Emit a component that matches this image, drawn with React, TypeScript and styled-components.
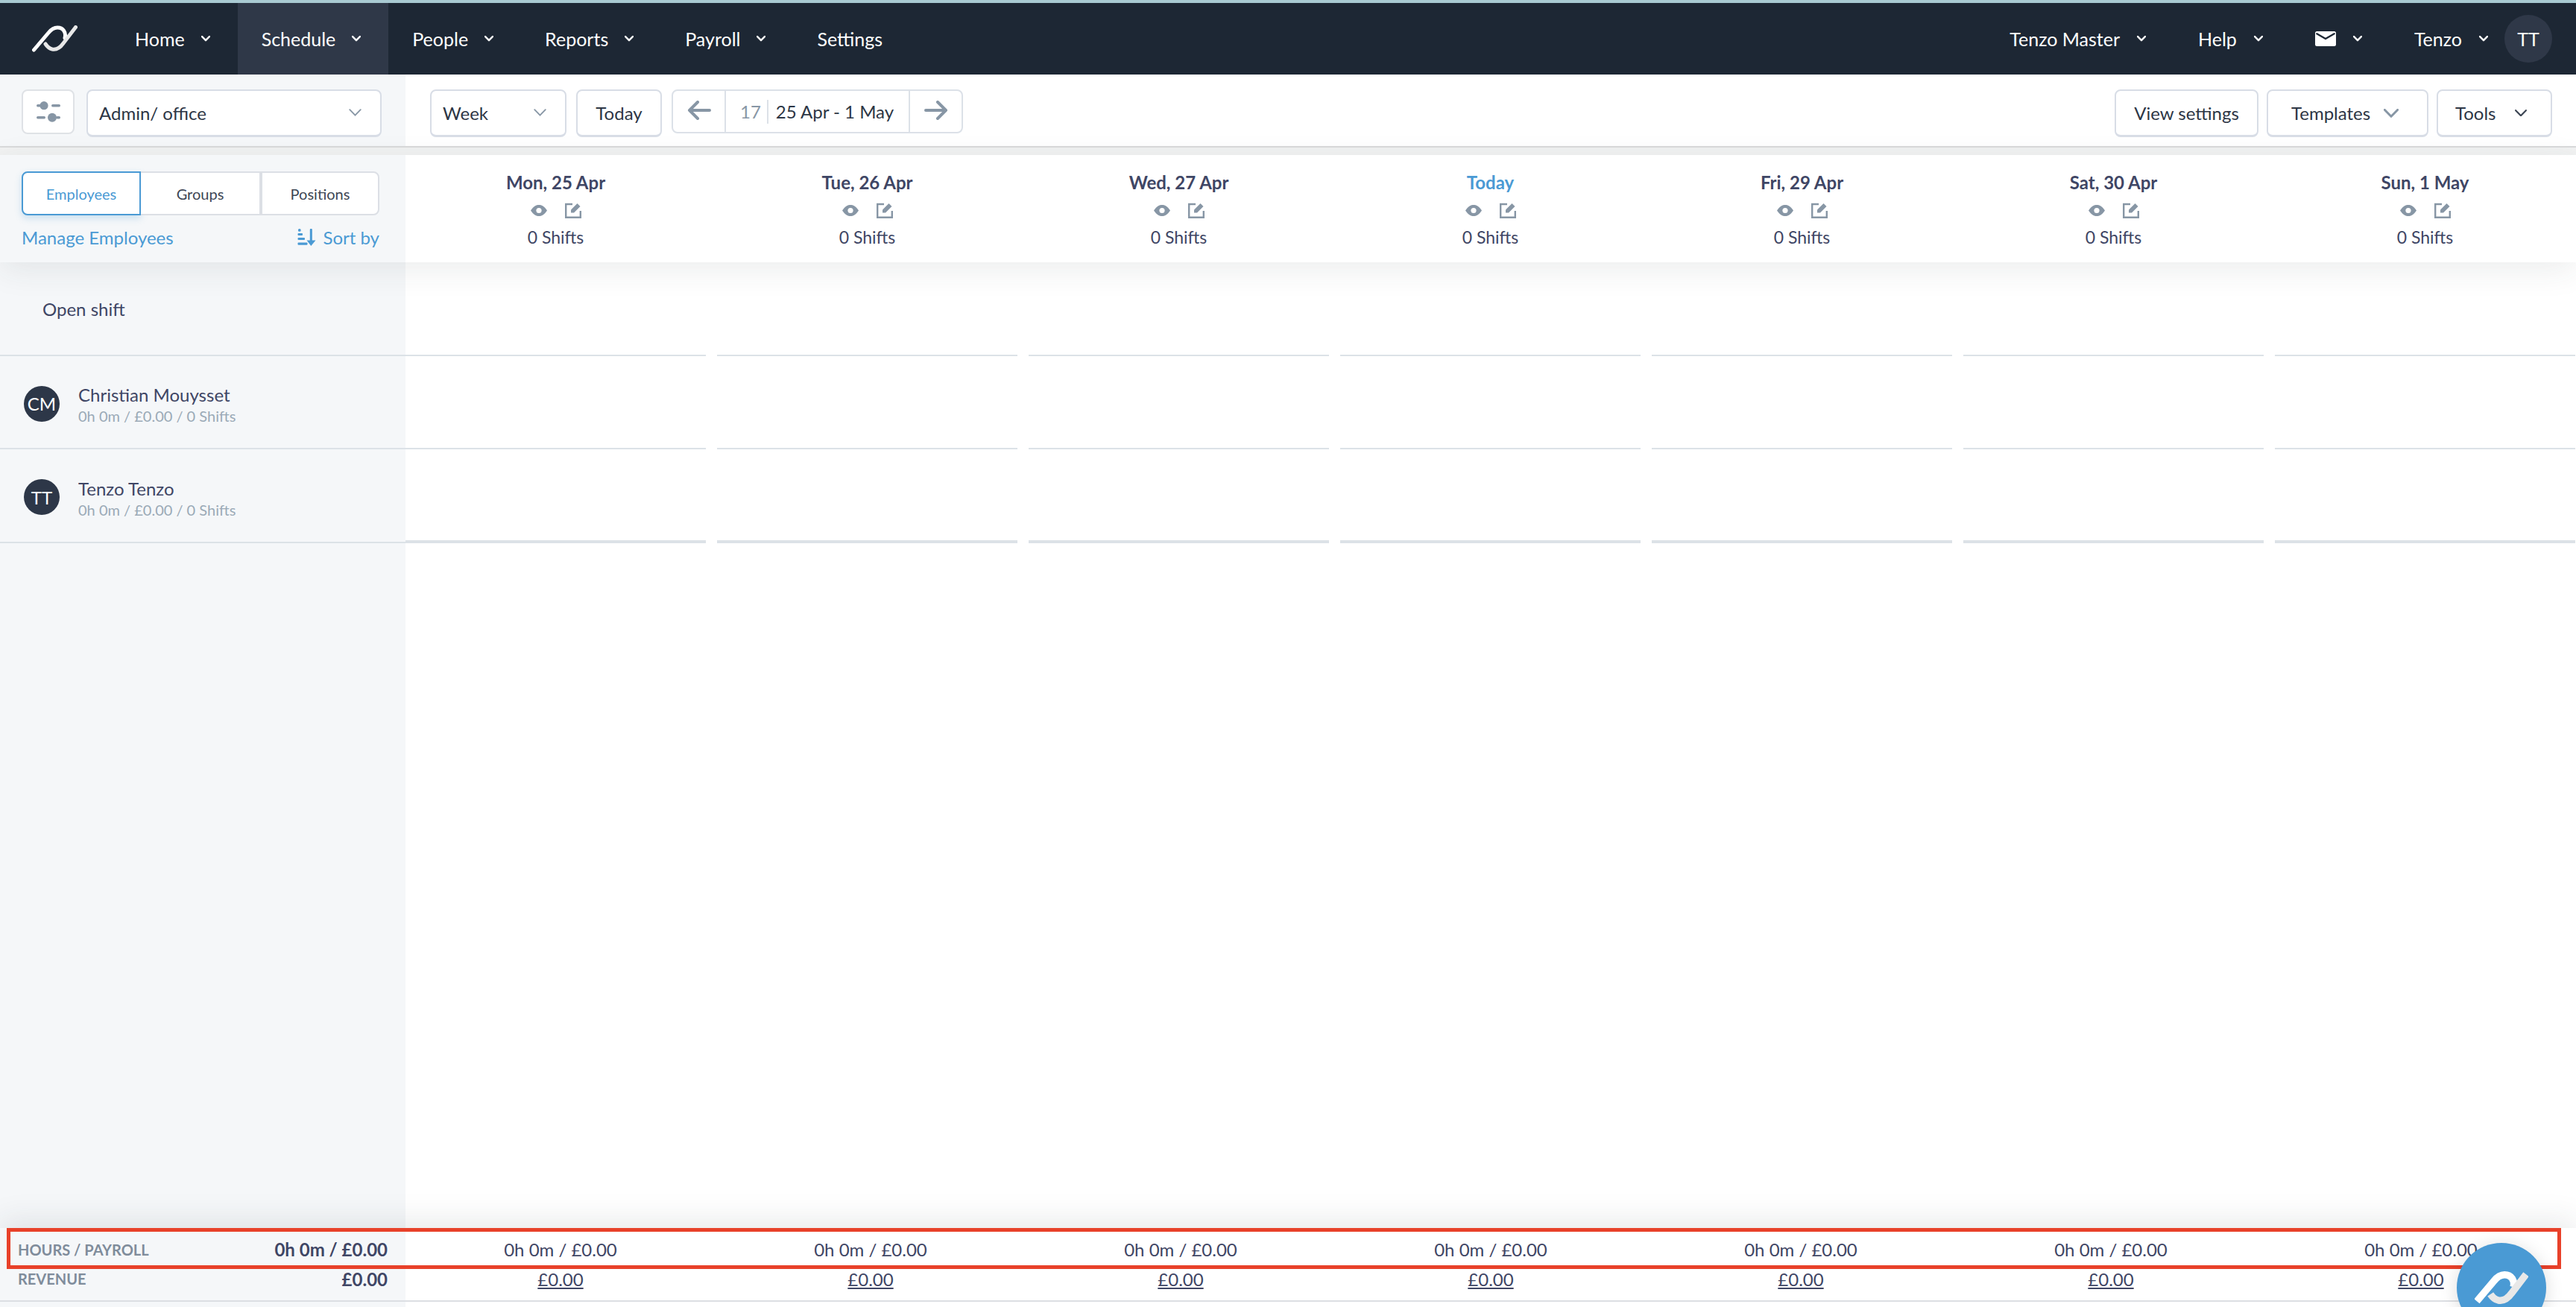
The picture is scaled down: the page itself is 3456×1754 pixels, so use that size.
import styled, { createGlobalStyle } from "styled-components";

const GlobalStyle = createGlobalStyle`
  html, body {
    margin: 0;
    padding: 0;
    background: #ffffff;
  }
  body {
    font-family: Lato, "Noto Sans", sans-serif;
    color: #3f4665;
    overflow: hidden;
  }
  * {
    box-sizing: border-box;
  }
`;

const Page = styled.div`
  position: relative;
  width: 3456px;
  height: 1754px;
  display: flex;
  flex-direction: column;
  overflow: hidden;
  border-top: 4px solid #a9cad2;
`;

const Nav = styled.nav`
  height: 96px;
  flex: none;
  display: flex;
  align-items: stretch;
  background: #1d2734;
  color: #ffffff;
  font-size: 25px;
`;

const LogoSlot = styled.div`
  width: 149px;
  padding-left: 43px;
  display: flex;
  align-items: center;
`;

const NavItem = styled.div`
  display: flex;
  align-items: center;
  gap: 23px;
  padding: 0 38px 0 32px;
`;

const MainNavItem = styled(NavItem)<{ $active?: boolean }>`
  gap: 22px;
  padding-right: 37px;
  background: ${(p) => (p.$active ? "#2f3848" : "transparent")};
`;

const Spacer = styled.div`
  flex: 1;
`;

const NavAvatar = styled.div`
  width: 64px;
  height: 64px;
  margin: 0 32px 0 -16px;
  align-self: center;
  border-radius: 50%;
  background: #2f3848;
  display: flex;
  align-items: center;
  justify-content: center;
  font-size: 25px;
`;

const Toolbar = styled.div`
  height: 98px;
  flex: none;
  display: flex;
  border-bottom: 2px solid #d9dadb;
`;

const ToolbarSide = styled.div`
  width: 544px;
  flex: none;
  padding: 20px 0 0 29px;
  display: flex;
  align-items: flex-start;
  gap: 16px;
  background: #f5f7f9;
`;

const ToolbarMain = styled.div`
  flex: 1;
  padding: 20px 32px 0 33px;
  display: flex;
  align-items: flex-start;
  gap: 13px;
`;

const Button = styled.div<{ $w: number; $pad?: string; $center?: boolean }>`
  width: ${(p) => p.$w}px;
  height: 64px;
  padding: ${(p) => (p.$center ? "0" : p.$pad ?? "0 25px 0 15px")};
  display: flex;
  align-items: center;
  justify-content: ${(p) => (p.$center ? "center" : "space-between")};
  flex: none;
  background: #ffffff;
  border: 2px solid #d8dde6;
  border-bottom-width: 3px;
  border-radius: 8px;
  font-size: 24px;
  color: #2d3645;
`;

const IconButton = styled.div`
  width: 71px;
  height: 60px;
  flex: none;
  display: flex;
  align-items: center;
  justify-content: center;
  background: #ffffff;
  border: 2px solid #dfe2e6;
  border-radius: 8px;
`;

const DateGroup = styled.div`
  width: 391px;
  height: 59px;
  flex: none;
  display: flex;
  align-items: stretch;
  border: 2px solid #dce1e8;
  border-radius: 8px;
`;

const ArrowCell = styled.div`
  width: 69px;
  flex: none;
  display: flex;
  align-items: center;
  justify-content: center;
  padding-bottom: 3px;
`;

const DateCell = styled.div`
  flex: 1;
  display: flex;
  align-items: center;
  padding-left: 19px;
  border-left: 2px solid #dce1e8;
  border-right: 2px solid #dce1e8;
  font-size: 24px;
  color: #2d3645;
`;

const WeekNumber = styled.span`
  color: #8796a5;
  padding-right: 8px;
  margin-right: 10px;
  line-height: 32px;
  border-right: 2px solid #dce1e8;
`;

const ToolbarRight = styled.div`
  margin-left: auto;
  display: flex;
  gap: 11px;
`;

const Gutter = styled.div`
  height: 10px;
  flex: none;
  background: #f1f2f2;
`;

const HeaderRow = styled.div`
  position: relative;
  z-index: 1;
  height: 144px;
  flex: none;
  display: flex;
  box-shadow: 0 10px 40px rgba(40, 50, 60, 0.09);
`;

const HeaderSide = styled.div`
  width: 544px;
  flex: none;
  padding: 22px 35px 0 29px;
  background: #f5f7f9;
`;

const Tabs = styled.div`
  height: 59px;
  display: flex;
  font-size: 20px;
`;

const Tab = styled.div<{ $active?: boolean; $w: number }>`
  width: ${(p) => p.$w}px;
  display: flex;
  align-items: center;
  justify-content: center;
  background: #ffffff;
  color: ${(p) => (p.$active ? "#4a9ad4" : "#3d4654")};
  border: 2px solid ${(p) => (p.$active ? "#4a9ad4" : "#dcdfe5")};
  border-radius: ${(p) => (p.$active ? "8px 0 0 8px" : "0")};
  box-shadow: ${(p) => (p.$active ? "0 4px 10px rgba(74, 154, 212, 0.25)" : "none")};
  border-left-width: ${(p) => (p.$active ? 2 : 0)}px;
  border-right-width: 2px;

  &:last-child {
    border-left-width: 2px;
    border-radius: 0 8px 8px 0;
  }
`;

const SideLinks = styled.div`
  margin-top: 15px;
  display: flex;
  justify-content: space-between;
  align-items: center;
  font-size: 24px;
  color: #4a9ad4;
`;

const SortBy = styled.div`
  display: flex;
  align-items: center;
  gap: 9px;
`;

const DayHeads = styled.div`
  flex: 1;
  display: grid;
  grid-template-columns: repeat(7, 418px);
  background: #ffffff;
  overflow: hidden;
`;

const DayHead = styled.div<{ $today?: boolean }>`
  padding: 22px 15px 0 0;
  display: flex;
  flex-direction: column;
  align-items: center;
  h3 {
    margin: 0;
    font-size: 24px;
    line-height: 30px;
    font-weight: 700;
    color: ${(p) => (p.$today ? "#4a9ad4" : "#3f4665")};
  }
`;

const DayIcons = styled.div`
  height: 38px;
  margin-top: 3px;
  display: flex;
  align-items: center;
  gap: 24px;
`;

const ShiftCount = styled.div`
  margin-top: 3px;
  font-size: 23px;
  line-height: 28px;
  color: #3f4665;
`;

const Body = styled.div`
  flex: 1;
  display: flex;
  min-height: 0;
`;

const Names = styled.div`
  width: 544px;
  flex: none;
  background: #f5f7f9;
`;

const NameRow = styled.div`
  height: 125.7px;
  display: flex;
  align-items: center;
  gap: 25px;
  padding: 4px 0 0 32px;
  border-bottom: 2px solid #dce2e7;
  font-size: 24px;
  color: #3f4665;
`;

const OpenShift = styled(NameRow)`
  padding: 2px 0 0 57px;
`;

const Avatar = styled.div`
  width: 48px;
  height: 48px;
  border-radius: 50%;
  background: #2d3748;
  color: #ffffff;
  font-size: 24px;
  display: flex;
  align-items: center;
  justify-content: center;
  flex: none;
`;

const Person = styled.div`
  margin-top: 3px;
  display: flex;
  flex-direction: column;
  gap: 2px;
  line-height: 28px;
  small {
    font-size: 20px;
    line-height: 24px;
    color: #9baab7;
  }
`;

const Grid = styled.div`
  flex: 1;
  overflow: hidden;
`;

const GridCell = styled.div`
  border-bottom: 2px solid #dce2e7;
  margin-right: 15px;
`;

const GridRow = styled.div`
  height: 125.7px;
  display: grid;
  grid-template-columns: repeat(7, 418px);
  &:last-child ${GridCell} {
    border-bottom-width: 4px;
  }
`;

const Footer = styled.div`
  position: relative;
  z-index: 1;
  height: 106px;
  flex: none;
  padding-bottom: 9px;
  background: linear-gradient(to right, #f5f7f9 544px, #ffffff 544px);
  box-shadow: 0 -10px 40px rgba(40, 50, 60, 0.1);
  &::after {
    content: "";
    position: absolute;
    left: 0;
    right: 0;
    bottom: 7px;
    height: 2px;
    background: #dcdfe3;
  }
`;

const FooterRow = styled.div`
  height: 40px;
  display: grid;
  grid-template-columns: 544px repeat(7, 416px);
  align-items: center;
  &:first-child {
    margin-top: 9px;
    height: 39px;
  }
`;

const FooterLabel = styled.div`
  display: flex;
  justify-content: space-between;
  align-items: center;
  padding: 0 24px;
  font-size: 24px;
  font-weight: 700;
  color: #3f4665;
  span {
    font-size: 20px;
    color: #7f8c9b;
  }
`;

const FooterCell = styled.div`
  text-align: center;
  font-size: 24px;
  color: #3f4665;
`;

const RevenueLink = styled.a`
  color: #3f4665;
  text-decoration: underline;
  text-underline-offset: 2px;
`;

const Highlight = styled.div`
  position: absolute;
  left: 9px;
  top: 1644px;
  width: 3427px;
  height: 55px;
  border: 5px solid #e8412a;
  z-index: 2;
`;

const Fab = styled.div`
  position: absolute;
  left: 3296px;
  top: 1664px;
  width: 120px;
  height: 120px;
  border-radius: 50%;
  background: #4a9ad4;
  box-shadow: 0 4px 24px rgba(0, 0, 0, 0.14);
  z-index: 3;
  display: flex;
  justify-content: center;
  padding-top: 37px;
`;

const Chevron = ({ size = 14, color = "#ffffff", width = 2.4 }: { size?: number; color?: string; width?: number }) => (
  <svg width={size} height={size * 0.6} viewBox="0 0 14 8.4" fill="none">
    <polyline
      points="1,1 7,7.2 13,1"
      stroke={color}
      strokeWidth={(width * 14) / size}
      strokeLinecap="round"
      strokeLinejoin="round"
    />
  </svg>
);

const Logo = ({ w, h, stroke, cap }: { w: number; h: number; stroke: number; cap: "round" | "butt" }) => (
  <svg width={w} height={h} viewBox="0 0 61 36" fill="none">
    <path d="M2.5 33 L22 10 C26 5 30 3 34 3 C42 3 46 10 44 17" stroke="#ffffff" strokeWidth={stroke} strokeLinecap={cap} />
    <path d="M58.5 2.5 L42 24 C37 31 32 33 27 32 C23 31 20 28 18 25" stroke="#e8e8e8" strokeWidth={stroke} strokeLinecap={cap} />
  </svg>
);

const Sliders = () => (
  <svg width="32" height="28" viewBox="0 0 32 28" fill="#8796a5">
    <circle cx="10" cy="5.7" r="5.6" />
    <rect x="0" y="4" width="6" height="3.5" rx="1.7" />
    <rect x="20" y="4" width="12" height="3.5" rx="1.7" />
    <circle cx="21" cy="21.7" r="6" />
    <rect x="0" y="20" width="12" height="3.5" rx="1.7" />
    <rect x="26" y="20" width="6" height="3.5" rx="1.7" />
  </svg>
);

const SortIcon = () => (
  <svg width="25" height="23" viewBox="0 0 25 23" fill="#4a9ad4">
    <circle cx="2.8" cy="1.9" r="1.9" />
    <rect x="0.5" y="6" width="6.5" height="3" rx="1" />
    <rect x="0.5" y="12" width="9.5" height="3" rx="1" />
    <rect x="0.5" y="18.5" width="13" height="3.2" rx="1" />
    <rect x="16.8" y="0" width="3" height="18" rx="1" />
    <polygon points="12.5,15.5 24.5,15.5 18.3,23" />
  </svg>
);

const Arrow = ({ right }: { right?: boolean }) => (
  <svg width="32" height="26" viewBox="0 0 32 26" fill="none">
    <path
      d={right ? "M18 2 L29 13 L18 24 M29 13 H2" : "M14 2 L3 13 L14 24 M3 13 H30"}
      stroke="#8796a5"
      strokeWidth="4"
      strokeLinecap="round"
      strokeLinejoin="round"
    />
  </svg>
);

const Eye = () => (
  <svg width="22" height="15" viewBox="0 0 22 15">
    <path d="M0 7.5 C4 1.5 7.5 0 11 0 C14.5 0 18 1.5 22 7.5 C18 13.5 14.5 15 11 15 C7.5 15 4 13.5 0 7.5 Z" fill="#8796a5" />
    <circle cx="11" cy="7.5" r="3.6" fill="#ffffff" />
  </svg>
);

const EditIcon = () => (
  <svg width="22" height="22" viewBox="0 0 22 22" fill="none">
    <path d="M10 3 H1.2 V20.8 H20.8 V12" stroke="#8796a5" strokeWidth="2.4" />
    <path d="M8 14.5 V10.5 L16.5 2 L20.5 6 L12 14.5 Z" fill="#8796a5" />
  </svg>
);

const Mail = () => (
  <svg width="28" height="20" viewBox="0 0 28 20">
    <rect width="28" height="20" rx="2.5" fill="#ffffff" />
    <path d="M2.3 3.3 L14 10 L25.7 3.3" fill="none" stroke="#1d2734" strokeWidth="2.4" strokeLinecap="round" strokeLinejoin="round" />
  </svg>
);

const navLeft = [
  { label: "Home", menu: true },
  { label: "Schedule", menu: true, active: true },
  { label: "People", menu: true },
  { label: "Reports", menu: true },
  { label: "Payroll", menu: true },
  { label: "Settings", menu: false },
];

const days = ["Mon, 25 Apr", "Tue, 26 Apr", "Wed, 27 Apr", "Today", "Fri, 29 Apr", "Sat, 30 Apr", "Sun, 1 May"];

const people = [
  { initials: "CM", name: "Christian Mouysset" },
  { initials: "TT", name: "Tenzo Tenzo" },
];

function App() {
  return (
    <Page>
      <GlobalStyle />
      <Nav>
        <LogoSlot>
          <Logo w={61} h={36} stroke={5} cap="round" />
        </LogoSlot>
        {navLeft.map((item) => (
          <MainNavItem key={item.label} $active={item.active}>
            {item.label}
            {item.menu && <Chevron size={12} />}
          </MainNavItem>
        ))}
        <Spacer />
        <NavItem>
          Tenzo Master
          <Chevron size={12} />
        </NavItem>
        <NavItem>
          Help
          <Chevron size={12} />
        </NavItem>
        <NavItem>
          <Mail />
          <Chevron size={12} />
        </NavItem>
        <NavItem>
          Tenzo
          <Chevron size={12} />
        </NavItem>
        <NavAvatar>TT</NavAvatar>
      </Nav>

      <Toolbar>
        <ToolbarSide>
          <IconButton>
            <Sliders />
          </IconButton>
          <Button $w={396}>
            Admin/ office
            <Chevron size={17} color="#8796a5" width={1.8} />
          </Button>
        </ToolbarSide>
        <ToolbarMain>
          <Button $w={183}>
            Week
            <Chevron size={17} color="#8796a5" width={1.8} />
          </Button>
          <Button $w={115} $center>
            Today
          </Button>
          <DateGroup>
            <ArrowCell>
              <Arrow />
            </ArrowCell>
            <DateCell>
              <WeekNumber>17</WeekNumber>
              25 Apr - 1 May
            </DateCell>
            <ArrowCell>
              <Arrow right />
            </ArrowCell>
          </DateGroup>
          <ToolbarRight>
            <Button $w={193} $center>
              View settings
            </Button>
            <Button $w={217} $pad="0 38px 0 31px">
              Templates
              <Chevron size={20} color="#8796a5" width={3} />
            </Button>
            <Button $w={155} $pad="0 32px 0 23px">
              Tools
              <Chevron size={16} color="#3d4654" width={2.2} />
            </Button>
          </ToolbarRight>
        </ToolbarMain>
      </Toolbar>
      <Gutter />

      <HeaderRow>
        <HeaderSide>
          <Tabs>
            <Tab $active $w={160}>
              Employees
            </Tab>
            <Tab $w={161}>Groups</Tab>
            <Tab $w={159}>Positions</Tab>
          </Tabs>
          <SideLinks>
            <span>Manage Employees</span>
            <SortBy>
              <SortIcon />
              Sort by
            </SortBy>
          </SideLinks>
        </HeaderSide>
        <DayHeads>
          {days.map((day) => (
            <DayHead key={day} $today={day === "Today"}>
              <h3>{day}</h3>
              <DayIcons>
                <Eye />
                <EditIcon />
              </DayIcons>
              <ShiftCount>0 Shifts</ShiftCount>
            </DayHead>
          ))}
        </DayHeads>
      </HeaderRow>

      <Body>
        <Names>
          <OpenShift>Open shift</OpenShift>
          {people.map((person) => (
            <NameRow key={person.initials}>
              <Avatar>{person.initials}</Avatar>
              <Person>
                {person.name}
                <small>0h 0m / £0.00 / 0 Shifts</small>
              </Person>
            </NameRow>
          ))}
        </Names>
        <Grid>
          {[0, 1, 2].map((row) => (
            <GridRow key={row}>
              {days.map((day) => (
                <GridCell key={day} />
              ))}
            </GridRow>
          ))}
        </Grid>
      </Body>

      <Footer>
        <FooterRow>
          <FooterLabel>
            <span>HOURS / PAYROLL</span>
            0h 0m / £0.00
          </FooterLabel>
          {days.map((day) => (
            <FooterCell key={day}>0h 0m / £0.00</FooterCell>
          ))}
        </FooterRow>
        <FooterRow>
          <FooterLabel>
            <span>REVENUE</span>
            £0.00
          </FooterLabel>
          {days.map((day) => (
            <FooterCell key={day}>
              <RevenueLink>£0.00</RevenueLink>
            </FooterCell>
          ))}
        </FooterRow>
      </Footer>

      <Highlight />
      <Fab>
        <Logo w={72} h={47} stroke={8} cap="butt" />
      </Fab>
    </Page>
  );
}

export default App;
